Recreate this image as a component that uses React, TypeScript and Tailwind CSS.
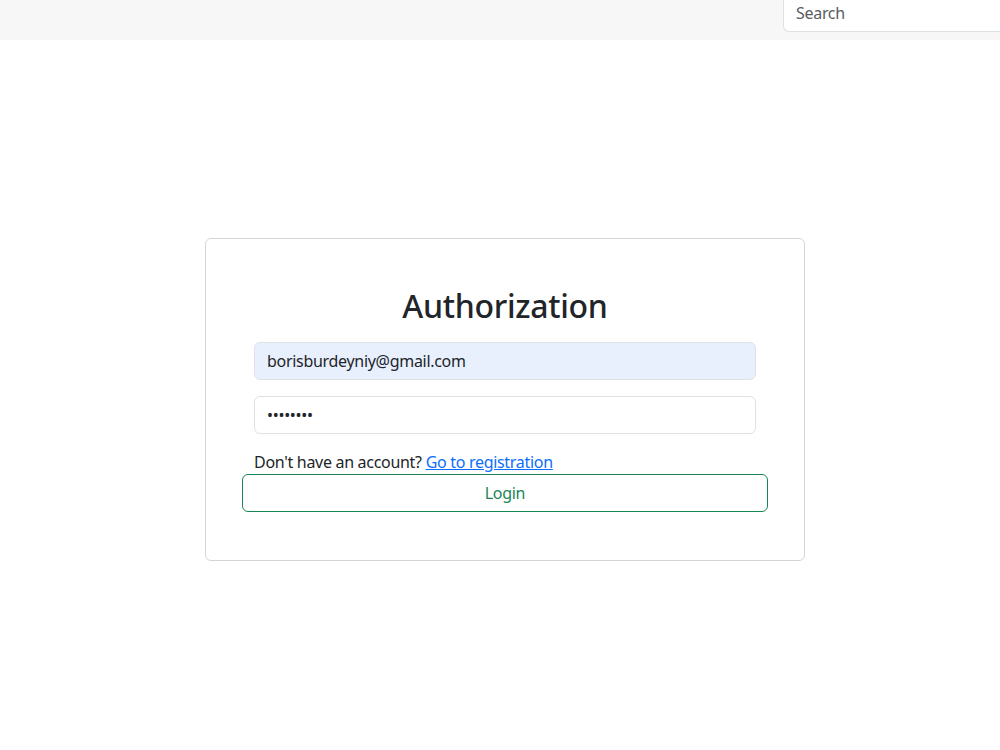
import React, { useState } from 'react';

const App: React.FC = () => {
  const [email, setEmail] = useState('borisburdeyniy@gmail.com');
  const [password, setPassword] = useState('12345678');
  const [search, setSearch] = useState('');

  return (
    <div className="min-h-[750px] bg-white text-[#212529] font-['Noto_Sans',sans-serif] tracking-[-0.3px]">
      <nav className="h-10 bg-[#f7f7f7] flex justify-end">
        <input
          type="text"
          value={search}
          onChange={(e) => setSearch(e.target.value)}
          placeholder="Search"
          className="-mt-[6px] ml-auto w-[217px] h-[38px] px-3 text-base tracking-[-0.3px] bg-white border border-[#dee2e6] border-r-0 rounded-l-md outline-none placeholder:text-[#595c5f]"
        />
      </nav>

      <div className="flex justify-center pl-[10px] pt-[198px]">
        <div className="w-[600px] border border-[#d5d5d5] rounded-md px-[48px] pt-[48px] pb-[48px]">
          <h1 className="text-[32px] leading-[38px] font-medium text-center mb-[17px]">Authorization</h1>
          <input
            type="email"
            value={email}
            onChange={(e) => setEmail(e.target.value)}
            className="block w-full h-[38px] px-3 text-base tracking-[-0.3px] bg-[#e8f0fe] border border-[#dee2e6] rounded-md outline-none"
          />
          <input
            type="password"
            value={password}
            onChange={(e) => setPassword(e.target.value)}
            className="block w-full h-[38px] px-3 mt-4 text-base bg-white border border-[#dee2e6] rounded-md outline-none"
          />
          <p className="mt-4 text-base leading-6">
            Don't have an account?{' '}
            <a href="#" className="text-[#0d6efd] underline">Go to registration</a>
          </p>
          <button className="block -mx-3 w-[calc(100%+24px)] h-[38px] text-base tracking-[-0.3px] text-[#198754] border border-[#198754] rounded-md bg-white">
            Login
          </button>
        </div>
      </div>
    </div>
  );
};

export default App;
